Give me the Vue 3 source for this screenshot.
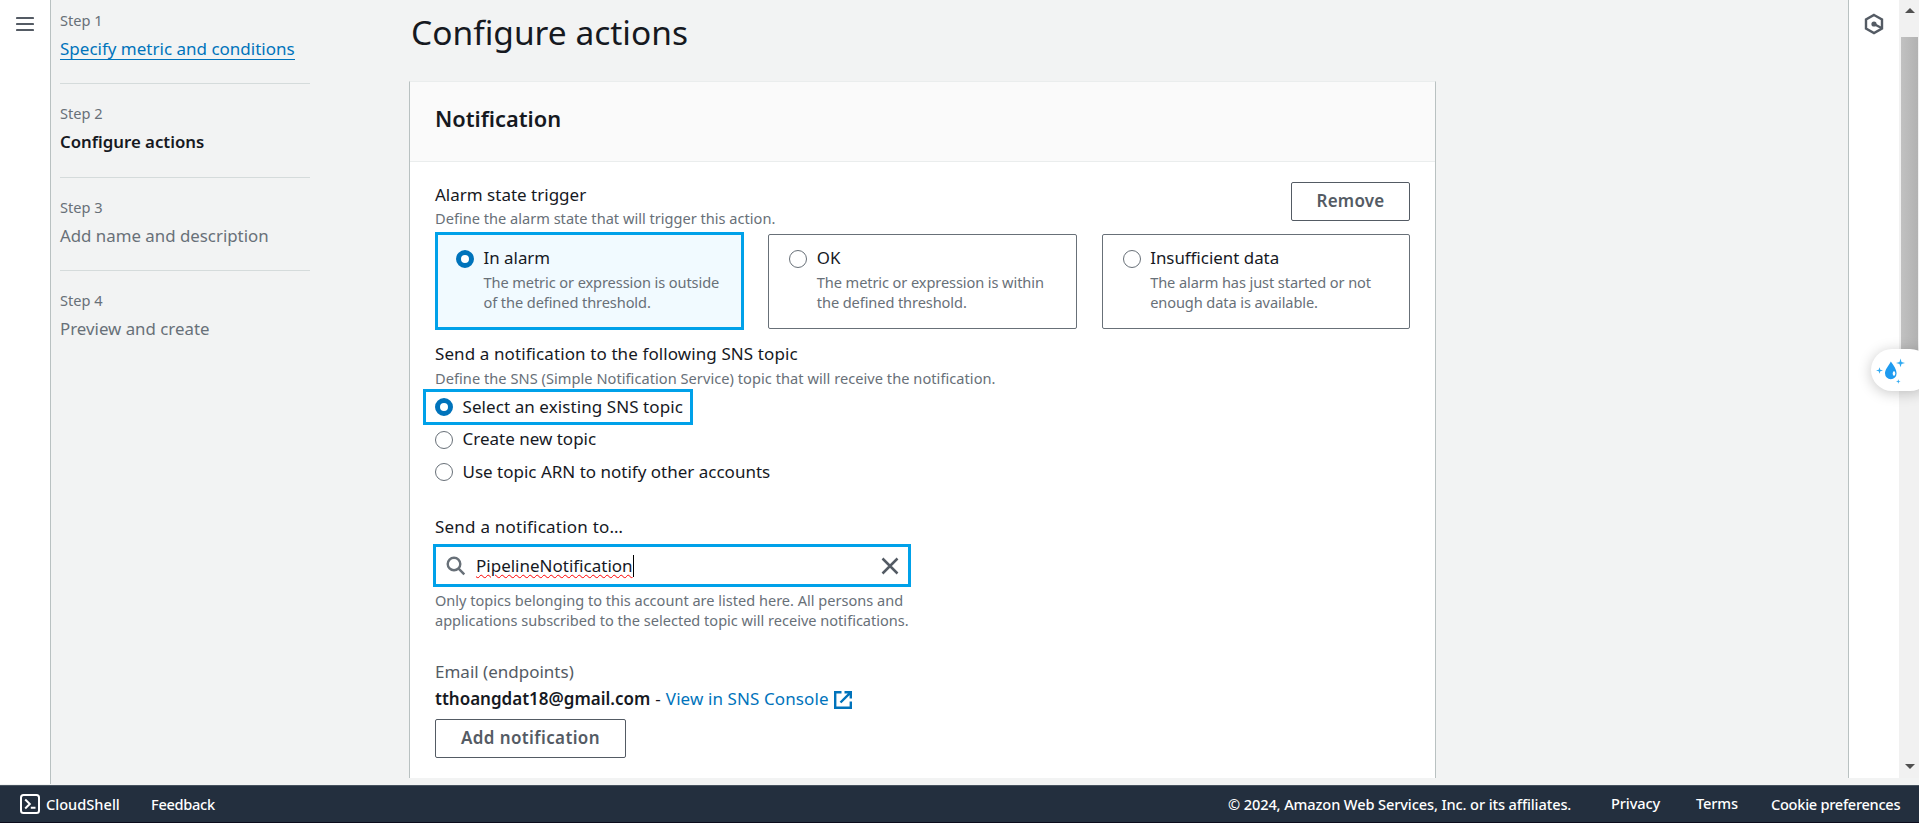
<script setup>
const steps = [
  { n: 1, name: 'Specify metric and conditions', state: 'link' },
  { n: 2, name: 'Configure actions', state: 'current' },
  { n: 3, name: 'Add name and description', state: 'todo' },
  { n: 4, name: 'Preview and create', state: 'todo' },
]
const tiles = [
  { title: 'In alarm', lines: ['The metric or expression is outside', 'of the defined threshold.'], on: true },
  { title: 'OK', lines: ['The metric or expression is within', 'the defined threshold.'], on: false },
  { title: 'Insufficient data', lines: ['The alarm has just started or not', 'enough data is available.'], on: false },
]
const options = [
  { label: 'Select an existing SNS topic', on: true },
  { label: 'Create new topic', on: false },
  { label: 'Use topic ARN to notify other accounts', on: false },
]
</script>

<template>
  <div class="page">
    <div class="upper">
      <aside class="rail">
        <svg width="18" height="16" viewBox="0 0 18 16"><path d="M1 2h16M1 8h16M1 14h16" stroke="#545b64" stroke-width="2.2" stroke-linecap="round" /></svg>
      </aside>
      <nav class="steps">
        <div v-for="s in steps" :key="s.n" class="step">
          <div class="small">Step {{ s.n }}</div>
          <div class="step-name" :class="s.state"><span>{{ s.name }}</span></div>
        </div>
      </nav>
      <main class="main">
        <h1>Configure actions</h1>
        <section class="card">
          <header><h2>Notification</h2></header>
          <div class="body">
            <div class="top-row">
              <div>
                <div class="label">Alarm state trigger</div>
                <div class="small hint">Define the alarm state that will trigger this action.</div>
              </div>
              <button class="btn remove">Remove</button>
            </div>
            <div class="tiles">
              <div v-for="t in tiles" :key="t.title" class="tile" :class="{ on: t.on }">
                <i class="radio" :class="{ on: t.on }"></i>
                <div>
                  <div class="label">{{ t.title }}</div>
                  <div class="tile-desc">
                    <div v-for="l in t.lines" :key="l" class="small">{{ l }}</div>
                  </div>
                </div>
              </div>
            </div>
            <div class="label sns">Send a notification to the following SNS topic</div>
            <div class="small hint sns-hint">Define the SNS (Simple Notification Service) topic that will receive the notification.</div>
            <div class="options">
              <div v-for="o in options" :key="o.label" class="option">
                <i class="radio" :class="{ on: o.on }"></i>
                <span class="label">{{ o.label }}</span>
              </div>
              <div class="marker"></div>
            </div>
            <div class="label send-to">Send a notification to…</div>
            <div class="search">
              <svg width="20" height="20" viewBox="0 0 20 20" fill="none" stroke="#687078" stroke-width="2.4"><circle cx="8" cy="8" r="6.3" /><path d="M12.6 12.6l5.7 5.7" /></svg>
              <span class="value">PipelineNotification</span><i class="caret"></i>
              <svg class="clear" width="18" height="18" viewBox="0 0 18 18"><path d="M1.5 1.5l15 15M16.5 1.5l-15 15" stroke="#545b64" stroke-width="2.5" /></svg>
            </div>
            <div class="small help">Only topics belonging to this account are listed here. All persons and</div>
            <div class="small help">applications subscribed to the selected topic will receive notifications.</div>
            <div class="label muted">Email (endpoints)</div>
            <div class="email">
              <b>tthoangdat18@gmail.com</b><span class="dash">-</span><a>View in SNS Console</a>
              <svg width="18" height="18" viewBox="0 0 18 18" fill="none" stroke="#0073bb" stroke-width="2.4"><path d="M7.5 1.2H1.2v15.6h15.6v-6.3M10.5 1.2h6.3v6.3M16.4 1.6L6.5 11.5" /></svg>
            </div>
            <button class="btn add">Add notification</button>
          </div>
        </section>
      </main>
      <aside class="tools">
        <svg width="20" height="22" viewBox="0 0 20 22" fill="none" stroke="#545b64"><path d="M10 2l8 4.5v9L10 20l-8-4.5v-9z" stroke-width="2.4" /><path d="M10 11l7.5 4" stroke-width="2.4" /><circle cx="10" cy="11" r="2.6" fill="#545b64" stroke="none" /></svg>
      </aside>
      <div class="scroll">
        <svg class="arrow" width="10" height="5" viewBox="0 0 10 5"><path d="M0 5L5 0l5 5z" fill="#505050" /></svg>
        <div class="thumb"></div>
        <svg class="arrow" width="10" height="5" viewBox="0 0 10 5"><path d="M0 0h10L5 5z" fill="#505050" /></svg>
      </div>
    </div>
    <footer>
      <svg width="20" height="20" viewBox="0 0 20 20" fill="none" stroke="#fff" stroke-width="2"><rect x="1" y="1" width="18" height="18" rx="2.5" /><path d="M5.2 5.5L9.8 10l-4.6 4.5M10.8 13.8h4.7" /></svg>
      <span class="cloud">CloudShell</span>
      <span class="feedback">Feedback</span>
      <span class="copy">© 2024, Amazon Web Services, Inc. or its affiliates.</span>
      <span class="up privacy">Privacy</span>
      <span class="up terms">Terms</span>
      <span class="cookie">Cookie preferences</span>
    </footer>
    <div class="assistant">
      <svg width="30" height="26" viewBox="0 0 30 26"><path d="M14.8 3.5c3 4.3 5.8 8 5.8 11.8a5.8 6 0 0 1-11.6 0C9 11.500 12.500 8 14.800 3.500z" fill="#1e9bf0" /><ellipse cx="18" cy="15.500" rx="1.300" ry="2.200" fill="#fff" /><path d="M24.500 0.500l1 3.400 3.500 1-3.500 1-1 3.400-1-3.400-3.500-1 3.500-1zM3.500 9.200l.8 2.500 2.700.8-2.700.8-.8 2.500-.8-2.500-2.700-.8 2.700-.8zM22.300 21.200l.6 1.700 1.700.6-1.700.6-.6 1.700-.6-1.700-1.700-.6 1.700-.6z" fill="#31aaf2" /></svg>
    </div>
  </div>
</template>

<style>
html, body { margin: 0; overflow: hidden; }
</style>

<style scoped>
* { box-sizing: border-box; }
.page { position: relative; width: 1919px; height: 823px; overflow: hidden; background: #f2f3f3; font-family: "Noto Sans", "Open Sans", sans-serif; font-size: 17px; line-height: 24px; color: #16191f; white-space: nowrap; }
.upper { display: flex; height: 785px; }
.rail { flex: none; width: 51px; height: 784px; background: #fff; border-right: 1px solid #b9c1c1; padding: 16px 0 0 16px; }
.rail svg { display: block; }
.steps { flex: none; width: 358px; padding: 10px 0 0 9px; }
.step { width: 250px; height: 74px; margin-bottom: 19.3px; border-bottom: 1px solid #d5dbdb; }
.step:nth-child(2) { height: 75px; margin-bottom: 18.300px; }
.step:last-child { border: 0; }
.small { font-size: 14.6px; line-height: 20px; height: 20px; color: #687078; }
.step-name { margin-top: 7px; }
.step-name span { display: inline-block; height: 23px; }
.link span { color: #0073bb; border-bottom: 1px solid #0073bb; }
.current { font-weight: 650; font-size: 16.8px; }
.todo { color: #687078; font-size: 16.850px; }
.main { flex: none; width: 1027px; }
h1 { margin: 0; padding: 9px 0 0 2px; height: 81px; font-size: 33.5px; line-height: 46px; font-weight: 400; }
.card { height: 697px; background: #fff; border: 1px solid #b9c1c1; border-top-color: #eaeded; border-bottom: 0; }
header { height: 80px; background: #fafafa; border-bottom: 1px solid #eaeded; padding: 22px 0 0 25px; }
h2 { margin: 0; font-size: 21.8px; line-height: 29px; font-weight: 600; }
.body { padding: 20px 25px 0; }
.label { height: 24px; }
.top-row { display: flex; justify-content: space-between; height: 52px; }
.top-row .label { padding-top: 1px; }
.hint { margin-top: 2px; }
.btn { display: flex; align-items: center; justify-content: center; height: 39px; padding: 0 0 1px; background: #fff; border: 1px solid #545b64; border-radius: 2px; color: #545b64; font: 600 17px/24px "Noto Sans", "Open Sans", sans-serif; letter-spacing: 0.2px; }
.remove { width: 119px; }
.tiles { display: grid; grid-template-columns: repeat(3, 1fr); column-gap: 25px; height: 95px; }
.tile { display: flex; border: 1px solid #687078; border-radius: 2px; padding: 11px 0 0 20px; }
.tile .small { letter-spacing: -0.1px; }
.tile .label { font-size: 16.900px; }
.tile.on { margin: -2px -1px -1px 0; border: 3px solid #00a1e9; border-radius: 0; background: #f1faff; padding-left: 18px; }
.radio { flex: none; width: 18px; height: 18px; border: 1.5px solid #687078; border-radius: 50%; background: #fff; }
.radio.on { border: 5.500px solid #0073bb; }
.tile .radio { margin: 4px 9.500px 0 0; }
.tile-desc { margin-top: 2px; }
.sns { margin-top: 13px; letter-spacing: 0.1px; }
.sns-hint { letter-spacing: 0.04px; }
.options { position: relative; padding-top: 6px; height: 127px; }
.option { display: flex; align-items: center; gap: 9.500px; height: 32.600px; }
.option:nth-child(1) .label { letter-spacing: 0.080px; }
.option:nth-child(2) .label, .option:nth-child(3) .label { margin-top: -1px; }
.options .option:first-child { margin-top: -3px; }
.marker { position: absolute; left: -12px; top: 1px; width: 270px; height: 36px; border: 3px solid #00a1e9; }
.send-to { letter-spacing: 0.22px; }
.search { display: flex; align-items: center; width: 478px; height: 43px; margin: 5px 0 3px -2px; border: 3px solid #00a1e9; background: #fff; padding: 0 9px 0 10px; }
.value { height: 24px; margin-left: 10px; text-decoration: underline wavy #f00 1px; text-underline-offset: 2px; }
.caret { width: 1px; height: 22px; background: #000; }
.clear { margin-left: auto; }
.help { font-size: 14.550px; }
.muted { margin-top: 30px; color: #545b64; }
.email { display: flex; height: 24px; margin: 3px 0 8px; }
.email b { font-weight: 650; letter-spacing: 0; }
.email a { color: #0073bb; letter-spacing: 0.1px; }
.dash { margin: 0 5px; }
.email svg { margin: 4px 0 0 5px; }
.add { width: 191px; letter-spacing: 0.38px; }
.tools { flex: none; width: 51px; height: 778px; margin-left: 412px; border-left: 1px solid #b9c1c1; background: #fff; padding: 13px 0 0 15px; }
.scroll { flex: none; width: 20px; height: 778px; padding: 8px 1px 9px 2px; background: #f1f1f1; display: flex; flex-direction: column; align-items: center; }
.arrow { flex: none; }
.thumb { width: 17px; height: 333px; margin: 24px 0 auto; background: linear-gradient(90deg, #c1c1c1, #b2b2b2); }
footer { display: flex; height: 38px; background: #232f3e; border-top: 1px solid #46525e; border-bottom: 1px solid #0b0b1c; padding: 8px 19px 0 20px; color: #fff; font-size: 14.600px; line-height: 20px; font-weight: 500; letter-spacing: -0.12px; }
.cloud { margin: 0 0 0 6px; width: 105px; letter-spacing: 0; }
.feedback { letter-spacing: -0.300px; }
.copy { margin-left: auto; width: 383px; }
.privacy { width: 85px; }
.terms { width: 75px; }
.cookie { width: 129px; letter-spacing: -0.280px; }
.up { margin-top: -1px; }
.assistant { position: absolute; left: 1871px; top: 349px; width: 60px; height: 42px; border-radius: 21px; background: #fff; box-shadow: 0 2px 14px rgba(0, 0, 0, .22); padding: 9px 0 0 5px; }
</style>
